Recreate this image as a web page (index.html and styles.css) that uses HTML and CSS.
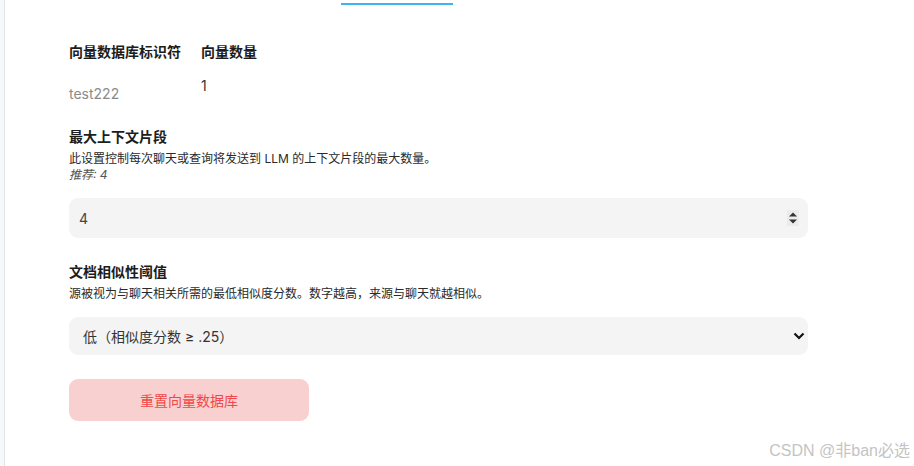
FILE: index.html
```html
<!DOCTYPE html>
<html lang="zh-CN">
<head>
  <meta charset="UTF-8" />
  <meta name="viewport" content="width=device-width, initial-scale=1.0"/>
  <title>向量数据库设置</title>
  <link rel="stylesheet" href="styles.css">
</head>
<body>
  <div class="page">
    <div class="rail"></div>
    <div class="panel">
      <!-- tab indicator -->
      <div class="tabs">
        <span class="tab-active"></span>
      </div>

      <div class="content">
        <div class="stats">
          <div class="stat">
            <h3>向量数据库标识符</h3>
            <p class="stat-id">test222</p>
          </div>
          <div class="stat">
            <h3>向量数量</h3>
            <p class="stat-count">1</p>
          </div>
        </div>

        <div class="field">
          <h3>最大上下文片段</h3>
          <p class="hint">此设置控制每次聊天或查询将发送到 LLM 的上下文片段的最大数量。</p>
          <p class="hint hint-rec">推荐: 4</p>
          <div class="input-box">
            <span>4</span>
            <svg class="spin" width="12" height="16" viewBox="0 0 12 16">
              <rect x="0" y="0" width="12" height="16" fill="#ebebeb"/>
              <path d="M2 6.5 L6 2.5 L10 6.5 Z" fill="#333"/>
              <path d="M2 9.5 L6 13.5 L10 9.5 Z" fill="#333"/>
            </svg>
          </div>
        </div>

        <div class="field">
          <h3>文档相似性阈值</h3>
          <p class="hint">源被视为与聊天相关所需的最低相似度分数。数字越高，来源与聊天就越相似。</p>
          <div class="input-box select-box">
            <span>低（相似度分数 ≥ .25）</span>
            <svg width="12" height="8" viewBox="0 0 12 8">
              <path d="M1.5 1.5 L6 6 L10.5 1.5" fill="none" stroke="#111" stroke-width="2.2"/>
            </svg>
          </div>
        </div>

        <button class="reset-btn">重置向量数据库</button>
      </div>
    </div>
  </div>
  <div class="watermark">CSDN @非ban必选</div>
</body>
</html>
```

FILE: styles.css
```css
body {
  margin: 0;
  font-family: Inter, "Noto Sans CJK SC", sans-serif;
  background: #fff;
  color: #222;
  height: 466px;
  overflow: hidden;
}

.page {
  display: flex;
  height: 466px;
}

.rail {
  width: 4px;
  background: #f7f8fa;
}

.panel {
  flex: 1;
  border-left: 1px solid #e2e4e8;
}

.tabs {
  height: 3px;
  padding-top: 3px;
  padding-left: 336px;
}

.tab-active {
  display: block;
  width: 112px;
  height: 2px;
  background: #3cb4ee;
}

.content {
  padding-left: 64px;
  width: 739px;
}

h3 {
  margin: 0;
  font-size: 14px;
  font-weight: 700;
  line-height: 18px;
  color: #1c1c1c;
}

.stats {
  display: flex;
  gap: 20px;
  margin-top: 37px;
}

.stat p {
  margin: 0;
  font-size: 14px;
  line-height: 18px;
}

.stat-id {
  color: #8a8a8a;
  padding-top: 24px;
}

.stat-count {
  color: #333;
  padding-top: 16px;
}

.field {
  margin-top: 25px;
}

.field + .field {
  margin-top: 25px;
}

.hint {
  margin: 5px 0 0;
  font-size: 12px;
  line-height: 16px;
  color: #2a2a2a;
}

.hint-rec {
  margin-top: 0;
  font-style: italic;
  color: #555;
}

.input-box {
  margin-top: 15px;
  height: 40px;
  background: #f4f4f4;
  border-radius: 9px;
  display: flex;
  align-items: center;
  justify-content: space-between;
  padding: 0 9px 0 10px;
  font-size: 14px;
  color: #444;
}

.select-box {
  height: 38px;
  padding: 0 3px 0 14px;
  color: #333;
}

.reset-btn {
  display: block;
  margin-top: 24px;
  width: 240px;
  height: 42px;
  border: none;
  border-radius: 9px;
  background: #f9d0d0;
  color: #f04848;
  font-family: Inter, "Noto Sans CJK SC", sans-serif;
  font-size: 14px;
}

.watermark {
  position: absolute;
  right: 4px;
  bottom: 5px;
  font-family: "Liberation Sans", "Noto Sans CJK SC", sans-serif;
  font-size: 16px;
  color: #c4c4c4;
}
```
